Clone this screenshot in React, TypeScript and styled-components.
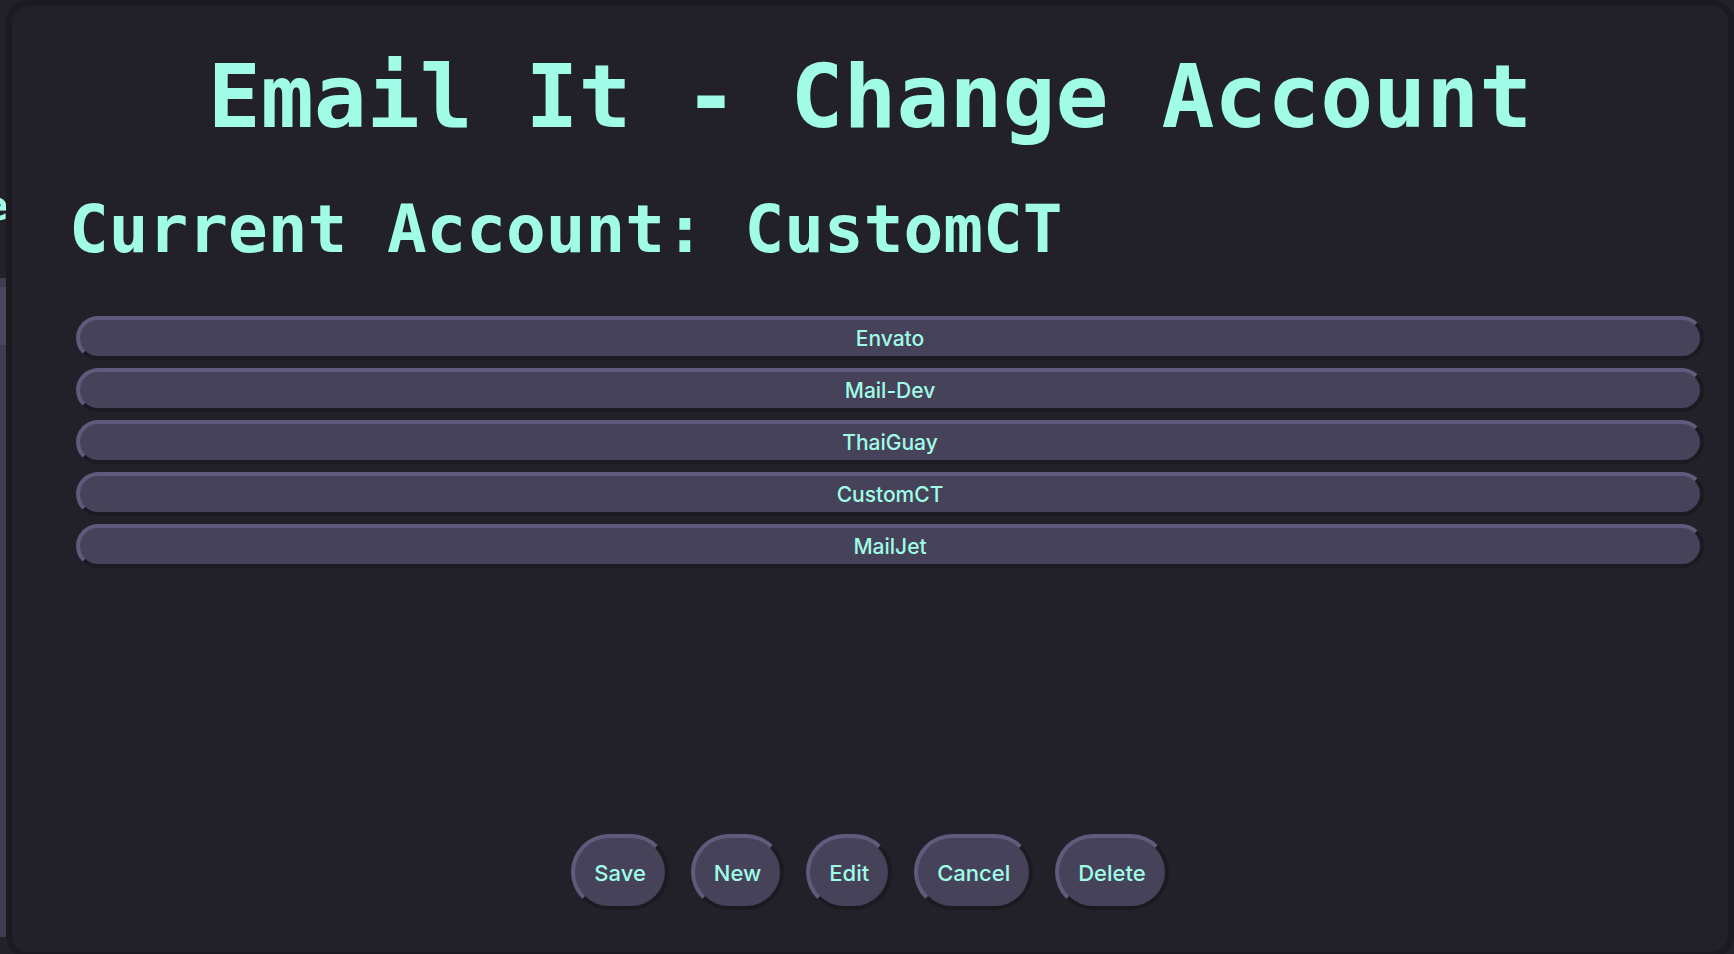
import React from 'react';
import styled, { createGlobalStyle } from 'styled-components';

const colors = {
    page: '#222029',
    edge: '#1b1a21',
    teal: '#a0fce6',
    row: '#464259',
    rowLight: '#605b7d',
    panel: '#3f3c52',
    panelHead: '#4b4761',
};

const accounts = ['Envato', 'Mail-Dev', 'ThaiGuay', 'CustomCT', 'MailJet'];
const actions = ['Save', 'New', 'Edit', 'Cancel', 'Delete'];

const GlobalStyle = createGlobalStyle`
    html, body {
        margin: 0;
        padding: 0;
        background: ${colors.page};
        overflow: hidden;
    }
    body {
        font-family: Inter, "Noto Sans", sans-serif;
    }
`;

const App: React.FC = (): React.ReactElement => {
    return (
        <>
            <GlobalStyle />
            <BackPage>
                <PeekTitle>
                    <PeekText>Email It - Template</PeekText>
                </PeekTitle>
                <BackPanel>
                    <BackPanelHead />
                </BackPanel>
            </BackPage>
            <Dialog>
                <Title>Email It - Change Account</Title>
                <Current>Current Account: CustomCT</Current>
                <AccountList>
                    {accounts.map((name) => (
                        <AccountRow key={name}>{name}</AccountRow>
                    ))}
                </AccountList>
                <ActionBar>
                    {actions.map((label) => (
                        <ActionButton key={label}>{label}</ActionButton>
                    ))}
                </ActionBar>
            </Dialog>
        </>
    );
};

const BackPage = styled.div`
    display: flex;
    flex-direction: column;
    width: 6px;
    height: 954px;
    overflow: hidden;
    background: ${colors.page};
`;

const PeekTitle = styled.div`
    display: flex;
    justify-content: flex-end;
    margin-top: 181px;
    height: 50px;
    overflow: hidden;
`;

const PeekText = styled.h2`
    margin: 0 -2px 0 0;
    flex-shrink: 0;
    white-space: nowrap;
    font-family: "DejaVu Sans Mono", monospace;
    font-weight: bold;
    font-size: 40px;
    line-height: 50px;
    color: ${colors.teal};
`;

const BackPanel = styled.div`
    margin-top: 47px;
    height: 650px;
    background: ${colors.panel};
    padding-top: 9px;
`;

const BackPanelHead = styled.div`
    height: 58px;
    background: ${colors.panelHead};
`;

const Dialog = styled.div`
    position: fixed;
    top: 0;
    left: 6px;
    width: 1728px;
    height: 958px;
    box-sizing: border-box;
    display: flex;
    flex-direction: column;
    background: ${colors.page};
    border: 6px solid ${colors.edge};
    border-radius: 22px;
`;

const Title = styled.h1`
    margin: 0;
    padding-top: 38px;
    text-align: center;
    font-family: "DejaVu Sans Mono", monospace;
    font-weight: bold;
    font-size: 88px;
    line-height: 1.2;
    color: ${colors.teal};
`;

const Current = styled.h2`
    margin: 40px 0 0 0;
    padding-left: 57px;
    font-family: "DejaVu Sans Mono", monospace;
    font-weight: bold;
    font-size: 66px;
    line-height: 1.2;
    color: ${colors.teal};
`;

const AccountList = styled.div`
    display: flex;
    flex-direction: column;
    gap: 8px;
    margin: 47px 24px 0 64px;
`;

const raised = `
    box-sizing: border-box;
    border-width: 4px;
    border-style: solid;
    border-color: ${colors.rowLight} ${colors.edge} ${colors.edge} ${colors.rowLight};
    background: ${colors.row};
    color: ${colors.teal};
    font-family: Inter, "Noto Sans", sans-serif;
    font-weight: 500;
    cursor: pointer;
`;

const AccountRow = styled.button`
    ${raised}
    height: 44px;
    width: 100%;
    padding: 2px 0 0 0;
    border-radius: 22px;
    font-size: 21px;
    line-height: 34px;
`;

const ActionBar = styled.div`
    display: flex;
    justify-content: center;
    gap: 22px;
    margin-top: auto;
    padding: 0 0 42px 0;
`;

const ActionButton = styled.button`
    ${raised}
    height: 76px;
    padding: 3px 19px 0 19px;
    border-radius: 38px;
    font-size: 22px;
    line-height: 65px;
`;

export default App;
